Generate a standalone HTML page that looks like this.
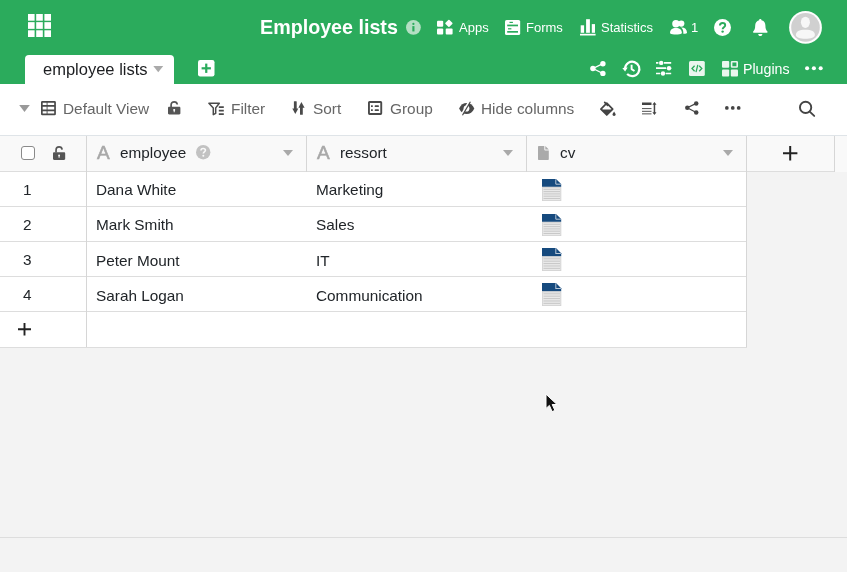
<!DOCTYPE html>
<html><head><meta charset="utf-8"><title>Employee lists</title>
<style>
*{box-sizing:border-box}
html,body{margin:0;padding:0}
body{width:847px;height:572px;overflow:hidden;position:relative;background:#f3f3f3;font-family:"Liberation Sans",sans-serif;color:#212529}
.abs{position:absolute}
.t{position:absolute;white-space:nowrap;line-height:1;will-change:transform}
#hdr{left:0;top:0;width:847px;height:84px;background:#2bab5c}
#hdr .t{color:#fff}
#tb{left:0;top:84px;width:847px;height:51px;background:#fff}
#tb .t{color:#666;font-size:15.4px}
svg{position:absolute;overflow:visible}
#thead{left:0;top:135px;width:847px;height:37px;background:#f9f9f9;border-top:1px solid #dfe4e8}
#thead .bl{position:absolute;left:0;top:35px;width:835px;height:1px;background:#ddd}
.row{left:0;width:747px;height:36px;background:#fff;border-bottom:1px solid #ddd}
.row .t{font-size:15.350px;top:10.200px}
.row.r3 .t,.row.r4 .t{top:11.200px}
.ai{font-size:19px;color:#a8a8a8;-webkit-text-stroke:0.55px #a8a8a8}
.vl{position:absolute;width:1px;background:#d6d6d6}
</style></head><body>
<!-- HEADER -->
<div id="hdr" class="abs">
  <div class="abs" style="left:25px;top:55px;width:149px;height:29px;background:#fff;border-radius:4px 4px 0 0"></div>
  <svg id="grid" style="left:28px;top:14px" width="23" height="23" viewBox="0 0 23 24" preserveAspectRatio="none"><g fill="#fff">
    <rect x="0" y="0" width="6.6" height="7"/><rect x="8.2" y="0" width="6.6" height="7"/><rect x="16.4" y="0" width="6.6" height="7"/>
    <rect x="0" y="8.5" width="6.6" height="7"/><rect x="8.2" y="8.5" width="6.6" height="7"/><rect x="16.4" y="8.5" width="6.6" height="7"/>
    <rect x="0" y="17" width="6.6" height="7"/><rect x="8.2" y="17" width="6.6" height="7"/><rect x="16.4" y="17" width="6.6" height="7"/></g></svg>

  <!-- info -->
  <svg style="left:405.700px;top:20.200px" width="14.800" height="14.800" viewBox="0 0 14.5 14.5"><circle cx="7.25" cy="7.25" r="7.25" fill="#b4dfc4"/><circle cx="7.25" cy="3.9" r="1.1" fill="#2bab5c"/><rect x="6.2" y="6" width="2.1" height="5.2" fill="#2bab5c"/></svg>
  <!-- apps -->
  <svg style="left:437.3px;top:20px" width="16" height="15" viewBox="0 0 16 15"><g fill="#fff"><rect x="0" y="0.7" width="6.2" height="6" rx="1"/><rect x="0" y="8.4" width="6.2" height="6.2" rx="1"/><rect x="8.7" y="8.4" width="6.9" height="6.2" rx="1"/><rect x="9.1" y="0.6" width="5.6" height="5.6" rx="0.8" transform="rotate(45 11.9 3.4)"/></g></svg>
  <!-- forms -->
  <svg style="left:505px;top:20px" width="15.2" height="15" viewBox="0 0 15.2 15"><rect x="0" y="0" width="15.2" height="15" rx="1.6" fill="#fff"/><g fill="#2bab5c"><rect x="4.5" y="1.8" width="3.4" height="1.2"/><rect x="2.2" y="4.6" width="10.8" height="1.7"/><rect x="3" y="8.2" width="3.4" height="1.2"/><rect x="2.2" y="11" width="10.8" height="1.7"/></g></svg>
  <!-- stats -->
  <svg style="left:580px;top:19px" width="15.6" height="16.6" viewBox="0 0 15.6 16.6"><g fill="#fff"><rect x="0.7" y="6.3" width="3.4" height="7.5"/><rect x="6.1" y="0.2" width="3.8" height="13.6"/><rect x="11.8" y="5.1" width="3.2" height="8.7"/><rect x="0" y="14.8" width="15.6" height="1.7"/></g></svg>
  <!-- users -->
  <svg style="left:669.8px;top:20px" width="17" height="14.6" viewBox="0 0 17 14.6"><g fill="#fff"><circle cx="11.3" cy="3.6" r="3.1"/><path d="M11 7.6 C14.5 7.3 16.9 9.2 17 12.6 L17 13 C16 13.6 14.5 13.8 13.3 13.8 L13.3 12 C13.2 10 12.3 8.6 11 7.6Z"/><circle cx="5.9" cy="3.7" r="3.7"/><path d="M0 13.2 C0 9.8 2.2 8 5.9 8 C9.6 8 11.9 9.8 11.9 13.2 C10.5 14.2 8.4 14.6 5.9 14.6 C3.4 14.6 1.4 14.2 0 13.2Z"/></g></svg>
  <!-- help -->
  <svg style="left:714.2px;top:18.9px" width="17" height="17" viewBox="0 0 17 17"><circle cx="8.5" cy="8.5" r="8.5" fill="#fff"/><path d="M5.9 6.6 C5.9 4.9 7.1 4 8.6 4 C10.1 4 11.2 4.9 11.2 6.3 C11.2 8.2 8.7 8.3 8.6 10.2" fill="none" stroke="#2bab5c" stroke-width="1.9"/><circle cx="8.6" cy="12.6" r="1.2" fill="#2bab5c"/></svg>
  <!-- bell -->
  <svg style="left:752.8px;top:18.9px" width="14.6" height="17" viewBox="0 0 14.6 17"><path fill="#fff" d="M7.3 0 C8 0 8.5 0.5 8.5 1.2 C11 1.8 12.4 3.9 12.4 6.5 C12.4 9.8 13.2 11.3 14.4 12.4 C14.9 12.9 14.6 13.8 13.8 13.8 L0.8 13.8 C0 13.8 -0.3 12.9 0.2 12.4 C1.4 11.3 2.2 9.8 2.2 6.5 C2.2 3.9 3.6 1.8 6.1 1.2 C6.1 0.5 6.6 0 7.3 0Z M5.2 14.9 L9.4 14.9 C9.4 16.1 8.5 17 7.3 17 C6.1 17 5.2 16.1 5.2 14.9Z"/></svg>
  <!-- avatar -->
  <svg style="left:789px;top:11px" width="33" height="33" viewBox="0 0 33 33"><circle cx="16.500" cy="16.400" r="16.400" fill="#fdfdfd"/><circle cx="16.500" cy="16.400" r="14.300" fill="#d0d0d0"/><g fill="#f7f7f7"><ellipse cx="16.400" cy="11.300" rx="4.500" ry="5.600"/><path d="M6.900 24 C6.900 20.500 10 18.700 16.400 18.700 C22.800 18.700 25.900 20.500 25.900 24 C25.900 26.400 22 27.700 16.400 27.700 C10.800 27.700 6.900 26.400 6.900 24Z"/></g></svg>
  <!-- tab caret -->
  <svg style="left:153px;top:66px" width="10.5" height="6.5" viewBox="0 0 10.5 6.5"><path d="M0.3 0 L10.2 0 L5.25 6.2Z" fill="#aaa"/></svg>
  <!-- plus square -->
  <svg style="left:198px;top:60px" width="16.500" height="16.500" viewBox="0 0 16.5 16.5"><rect width="16.5" height="16.5" rx="2.2" fill="#fff"/><rect x="3.6" y="7.2" width="9.300" height="2.2" fill="#2bab5c"/><rect x="7.15" y="3.6" width="2.2" height="9.300" fill="#2bab5c"/></svg>
  <!-- share -->
  <svg style="left:589.900px;top:61px" width="15.800" height="15" viewBox="0 0 15.800 15"><g fill="#fff"><path d="M12.900 2.600 L3 7.500 L12.900 12.500" fill="none" stroke="#fff" stroke-width="1.300"/><circle cx="2.900" cy="7.500" r="2.700"/><circle cx="12.900" cy="2.700" r="2.700"/><circle cx="12.900" cy="12.400" r="2.700"/></g></svg>
  <!-- history -->
  <svg style="left:621.500px;top:59.500px" width="18.500" height="17.800" viewBox="0 0 18.500 17.800"><path d="M3.050 8.300 A7.200 7.200 0 1 1 5.100 14" fill="none" stroke="#fff" stroke-width="2.200"/><path d="M0.300 7.900 L5.700 7.400 L3.100 11.600Z" fill="#fff"/><path d="M9.600 4.800 V9.100 L12.500 11" fill="none" stroke="#fff" stroke-width="1.900" stroke-linejoin="round"/></svg>
  <!-- sliders -->
  <svg style="left:656.300px;top:61px" width="15.200" height="15" viewBox="0 0 15.200 15"><g stroke="#fff" stroke-width="1.700" fill="none"><path d="M0 1.900 H2.400 M7.900 1.900 H15.200 M0 7.200 H10.200 M14.900 7.200 H15.200 M0 12.500 H4.200 M9.700 12.500 H15.200"/></g><g fill="#fff"><circle cx="5.200" cy="1.900" r="2.200"/><circle cx="13" cy="7.200" r="2.200"/><circle cx="7" cy="12.500" r="2.200"/></g></svg>
  <!-- code -->
  <svg style="left:689px;top:61px" width="15.800" height="15" viewBox="0 0 15.800 15"><rect width="15.800" height="15" rx="1.500" fill="#eaf6ee"/><g stroke="#2bab5c" stroke-width="1.300" fill="none"><path d="M5.600 4.800 L3 7.500 L5.600 10.200"/><path d="M10.200 4.800 L12.800 7.500 L10.200 10.200"/><path d="M8.800 3.900 L7 11.100"/></g></svg>
  <!-- plugins -->
  <svg style="left:722px;top:60.800px" width="16" height="15.400" viewBox="0 0 16 15.400"><g fill="#eaf6ee"><rect x="0" y="0" width="7.200" height="6.800" rx="1"/><rect x="0" y="8.400" width="7.200" height="7" rx="1"/><rect x="8.800" y="8.400" width="7.200" height="7" rx="1"/></g><rect x="9.600" y="0.800" width="5.600" height="5.200" rx="0.500" fill="none" stroke="#eaf6ee" stroke-width="1.600"/></svg>
  <!-- ellipsis -->
  <svg style="left:805px;top:66px" width="18" height="4.400" viewBox="0 0 18 4.400"><g fill="#fff"><circle cx="2.100" cy="2.200" r="2.050"/><circle cx="8.900" cy="2.200" r="2.050"/><circle cx="15.700" cy="2.200" r="2.050"/></g></svg>
  <div class="t" style="left:259.600px;top:18.400px;font-size:19.700px;font-weight:bold">Employee lists</div>
  <div class="t" style="left:459px;top:21px;font-size:13px">Apps</div>
  <div class="t" style="left:526px;top:21px;font-size:13px">Forms</div>
  <div class="t" style="left:601px;top:21px;font-size:13px">Statistics</div>
  <div class="t" style="left:691px;top:21px;font-size:13px">1</div>
  <div class="t" style="left:43.300px;top:60.600px;font-size:16.500px;color:#1c1e21">employee lists</div>
  <div class="t" style="left:743px;top:61.6px;font-size:14.2px">Plugins</div>
</div>
<!-- TOOLBAR -->
<div id="tb" class="abs">

  <!-- caret -->
  <svg style="left:19.400px;top:20.800px" width="11" height="7.200" viewBox="0 0 11 7.200"><path d="M0.200 0 L10.800 0 L5.500 7Z" fill="#999"/></svg>
  <!-- table icon -->
  <svg style="left:41px;top:17px" width="15" height="14.300" viewBox="0 0 15 14.300"><g fill="none" stroke="#4a4a4a" stroke-width="1.700"><rect x="0.850" y="0.850" width="13.200" height="12.600" rx="0.500"/><path d="M0.850 4.900 H14 M0.850 9.400 H14"/><path d="M6.100 0.850 V13.400" stroke-width="1.100" opacity="0.800"/></g></svg>
  <!-- unlock -->
  <svg style="left:168.200px;top:17.200px" width="12.400" height="13.400" viewBox="0 0 12.400 13.400"><path d="M3.100 6 V3.900 C3.100 2 4.400 0.900 6.200 0.900 C7.900 0.900 9.100 1.900 9.300 3.500" fill="none" stroke="#555" stroke-width="1.700"/><path fill="#555" fill-rule="evenodd" d="M1.200 5.800 H11.200 C11.900 5.800 12.400 6.300 12.400 7 V12.200 C12.400 12.900 11.900 13.400 11.200 13.400 H1.200 C0.500 13.400 0 12.900 0 12.200 V7 C0 6.300 0.500 5.800 1.200 5.800Z M6.200 8 C5.600 8 5.200 8.400 5.200 9 C5.200 9.400 5.400 9.700 5.700 9.900 V11.200 H6.700 V9.900 C7 9.700 7.200 9.400 7.200 9 C7.200 8.400 6.800 8 6.200 8Z"/></svg>
  <!-- filter -->
  <svg style="left:208px;top:17.500px" width="16" height="13.500" viewBox="0 0 16 13.500"><path d="M0.900 1.200 H11.300 L7.700 5.900 V11.300 L5.300 12.700 V5.900Z" fill="none" stroke="#4a4a4a" stroke-width="1.500" stroke-linejoin="round"/><path d="M10.800 5.100 H15.800 M10.800 8.600 H15.800 M10.800 12.200 H15.800" stroke="#4a4a4a" stroke-width="1.800"/></svg>
  <!-- sort -->
  <svg style="left:292px;top:17px" width="13" height="14" viewBox="0 0 13 14"><g fill="#4a4a4a"><rect x="1.900" y="0.200" width="2.800" height="8.600" rx="0.500"/><path d="M0.300 7.600 H6.300 L3.300 13Z"/><rect x="8" y="6" width="2.800" height="7.700" rx="0.500"/><path d="M6.400 6.800 H12.600 L9.400 1Z"/></g></svg>
  <!-- group -->
  <svg style="left:368px;top:17px" width="14.200" height="13.900" viewBox="0 0 14.200 13.900"><rect x="0.950" y="0.950" width="12.300" height="12" rx="0.600" fill="none" stroke="#4a4a4a" stroke-width="1.900"/><g fill="#4a4a4a"><rect x="3" y="4.300" width="1.800" height="1.700"/><rect x="6.700" y="4.300" width="4.200" height="1.700" rx="0.600"/><rect x="3" y="8.300" width="1.800" height="1.700"/><rect x="6.700" y="8.300" width="4.200" height="1.700" rx="0.600"/></g></svg>
  <!-- eye slash -->
  <svg style="left:458.600px;top:18px" width="15.400" height="13" viewBox="0 0 15.400 13"><path d="M0.100 6.500 C1.800 2.800 4.500 1 7.700 1 C10.900 1 13.600 2.800 15.300 6.500 C13.600 10.200 10.900 12 7.700 12 C4.500 12 1.800 10.200 0.100 6.500Z" fill="#4a4a4a"/><ellipse cx="7.500" cy="6.500" rx="2.900" ry="3.100" fill="#fff"/><path d="M10.100 -0.300 L2.700 12.700" stroke="#fff" stroke-width="2.200"/><path d="M11.200 0.100 L3.700 12.900" stroke="#4a4a4a" stroke-width="1.100" stroke-linecap="round"/></svg>
  <!-- paint bucket -->
  <svg style="left:599.800px;top:17.700px" width="16.200" height="14.800" viewBox="0 0 16.200 14.800"><path d="M6.800 1.200 L12.700 7.100 L6.800 13 L0.900 7.100Z" fill="none" stroke="#444" stroke-width="1.700" stroke-linejoin="round"/><path d="M1.200 7.500 H12.400 L6.800 13.200Z" fill="#444"/><path d="M4.700 0.400 L7.600 3.300" stroke="#444" stroke-width="1.700" stroke-linecap="round"/><path d="M14.100 9.500 C14.900 10.800 15.700 11.700 15.700 12.600 C15.700 13.400 15 14.100 14.100 14.100 C13.200 14.100 12.500 13.400 12.500 12.600 C12.500 11.700 13.300 10.800 14.100 9.500Z" fill="#444"/></svg>
  <!-- row height -->
  <svg style="left:642.300px;top:17.600px" width="14.800" height="13" viewBox="0 0 14.800 13"><g fill="#444"><rect x="0" y="0.500" width="9.500" height="2.500"/><rect x="0" y="6" width="9.500" height="1.100" opacity="0.850"/><rect x="0" y="8.800" width="9.500" height="1.100" opacity="0.850"/><rect x="0" y="11.300" width="9.500" height="1.100" opacity="0.850"/><rect x="11.700" y="1.500" width="1.500" height="10"/><path d="M10.400 2.800 L12.450 0 L14.500 2.800Z M10.400 10.200 L12.450 13 L14.500 10.200Z"/></g></svg>
  <!-- share -->
  <svg style="left:684.600px;top:17.300px" width="14" height="14" viewBox="0 0 14 14"><g fill="#444"><path d="M11.200 2.400 L2.300 6.800 L11.200 11.500" fill="none" stroke="#444" stroke-width="1.200"/><circle cx="2.300" cy="6.800" r="2.250"/><circle cx="11.200" cy="2.400" r="2.250"/><circle cx="11.200" cy="11.500" r="2.250"/></g></svg>
  <!-- ellipsis -->
  <svg style="left:725.300px;top:22.300px" width="15.600" height="3.800" viewBox="0 0 15.600 3.800"><g fill="#444"><circle cx="1.850" cy="1.900" r="1.850"/><circle cx="7.750" cy="1.900" r="1.850"/><circle cx="13.700" cy="1.900" r="1.850"/></g></svg>
  <!-- search -->
  <svg style="left:798px;top:16px" width="18" height="18" viewBox="0 0 18 18"><circle cx="7.600" cy="7.400" r="5.650" fill="none" stroke="#444" stroke-width="1.900"/><path d="M11.700 11.600 L16.200 15.900" stroke="#444" stroke-width="1.900" stroke-linecap="round"/></svg>
  <div class="t" style="left:63px;top:17px">Default View</div>
  <div class="t" style="left:230.600px;top:17px">Filter</div>
  <div class="t" style="left:313px;top:17px">Sort</div>
  <div class="t" style="left:389.500px;top:17px">Group</div>
  <div class="t" style="left:480.500px;top:17px">Hide columns</div>
</div>
<!-- TABLE HEADER -->
<div id="thead" class="abs">
  <div class="bl"></div>

  <!-- checkbox -->
  <div class="abs" style="left:21px;top:10px;width:14px;height:14px;border:1px solid #8a8a8a;border-radius:3px;background:#fff"></div>
  <!-- unlock -->
  <svg style="left:53px;top:10px" width="12.200" height="14" viewBox="0 0 12.400 14.200"><path d="M3.100 6.600 V4.200 C3.100 2.100 4.400 0.900 6.200 0.900 C7.900 0.900 9.100 1.900 9.300 3.600" fill="none" stroke="#555" stroke-width="1.700"/><path fill="#555" fill-rule="evenodd" d="M1.200 6.400 H11.200 C11.900 6.400 12.400 6.900 12.400 7.600 V13 C12.400 13.700 11.900 14.200 11.200 14.200 H1.200 C0.500 14.200 0 13.700 0 13 V7.600 C0 6.900 0.500 6.400 1.200 6.400Z M6.200 8.700 C5.600 8.700 5.200 9.100 5.200 9.700 C5.200 10.100 5.400 10.400 5.700 10.600 V12 H6.700 V10.600 C7 10.400 7.200 10.100 7.200 9.700 C7.200 9.100 6.800 8.700 6.200 8.700Z"/></svg>
  <div class="t ai" style="left:97px;top:6.700px">A</div>
  <div class="t ai" style="left:317px;top:6.700px">A</div>
  <!-- help -->
  <svg style="left:196.400px;top:9px" width="14.400" height="14.400" viewBox="0 0 14.200 14.200"><circle cx="7.100" cy="7.100" r="7.100" fill="#c2c2c2"/><path d="M4.900 5.500 C4.900 4.100 5.900 3.400 7.100 3.400 C8.300 3.400 9.300 4.100 9.300 5.300 C9.300 6.800 7.200 6.900 7.200 8.500" fill="none" stroke="#f9f9f9" stroke-width="1.600"/><circle cx="7.200" cy="10.600" r="1" fill="#f9f9f9"/></svg>
  <!-- carets -->
  <svg style="left:282.600px;top:14.300px" width="10" height="6" viewBox="0 0 10 6"><path d="M0 0 H10 L5 6Z" fill="#aaa"/></svg>
  <svg style="left:502.600px;top:14.300px" width="10" height="6" viewBox="0 0 10 6"><path d="M0 0 H10 L5 6Z" fill="#aaa"/></svg>
  <svg style="left:722.800px;top:14.300px" width="10" height="6" viewBox="0 0 10 6"><path d="M0 0 H10 L5 6Z" fill="#aaa"/></svg>
  <!-- file icon -->
  <svg style="left:538px;top:9.500px" width="10.800" height="14" viewBox="0 0 10.800 14"><path d="M1 0 H6.300 V3.600 C6.300 4.200 6.700 4.500 7.200 4.500 H10.800 V13 C10.800 13.600 10.400 14 9.800 14 H1 C0.400 14 0 13.600 0 13 V1 C0 0.400 0.400 0 1 0Z M7.300 0 L10.800 3.500 H7.300Z" fill="#aaa"/></svg>
  <!-- plus -->
  <svg style="left:783.400px;top:9.600px" width="14.400" height="14.400" viewBox="0 0 14.400 14.400"><path d="M7.200 0 V14.400 M0 7.200 H14.400" stroke="#222" stroke-width="2"/></svg>
  <div class="t" style="left:119.800px;top:9.200px;font-size:15.300px">employee</div>
  <div class="t" style="left:339.800px;top:9.200px;font-size:15.300px">ressort</div>
  <div class="t" style="left:560px;top:9.200px;font-size:15.300px">cv</div>
</div>
<!-- ROWS -->
<div class="row abs" style="top:172px;height:35px"><svg style="left:541.500px;top:7px" width="20" height="22" viewBox="0 0 20 22"><rect x="0" y="7" width="19.200" height="15" fill="#e9e9e9"/><path d="M0 0 H14 L19.200 5 V7.800 H0Z" fill="#164a7e"/><path d="M13.800 0.300 V5.200 H18.900" fill="none" stroke="#b9c7d6" stroke-width="1"/><g stroke="#c4c4c4" stroke-width="0.900"><path d="M1.500 10.300 H18 M1.500 12.600 H18 M1.500 14.900 H18 M1.500 17.200 H18 M1.500 19.500 H18"/></g><rect x="0.400" y="8.600" width="18.400" height="13" fill="none" stroke="#d2d2d2" stroke-width="0.800"/></svg><div class="t" style="left:23.200px">1</div><div class="t" style="left:95.600px">Dana White</div><div class="t" style="left:316px">Marketing</div></div>
<div class="row abs" style="top:207px;height:35px"><svg style="left:541.500px;top:7px" width="20" height="22" viewBox="0 0 20 22"><rect x="0" y="7" width="19.200" height="15" fill="#e9e9e9"/><path d="M0 0 H14 L19.200 5 V7.800 H0Z" fill="#164a7e"/><path d="M13.800 0.300 V5.200 H18.900" fill="none" stroke="#b9c7d6" stroke-width="1"/><g stroke="#c4c4c4" stroke-width="0.900"><path d="M1.500 10.300 H18 M1.500 12.600 H18 M1.500 14.900 H18 M1.500 17.200 H18 M1.500 19.500 H18"/></g><rect x="0.400" y="8.600" width="18.400" height="13" fill="none" stroke="#d2d2d2" stroke-width="0.800"/></svg><div class="t" style="left:23.200px">2</div><div class="t" style="left:95.600px">Mark Smith</div><div class="t" style="left:316px">Sales</div></div>
<div class="row r3 abs" style="top:242px;height:35px"><svg style="left:541.500px;top:6px" width="20" height="23" viewBox="0 0 20 22" preserveAspectRatio="none"><rect x="0" y="7" width="19.200" height="15" fill="#e9e9e9"/><path d="M0 0 H14 L19.200 5 V7.800 H0Z" fill="#164a7e"/><path d="M13.800 0.300 V5.200 H18.900" fill="none" stroke="#b9c7d6" stroke-width="1"/><g stroke="#c4c4c4" stroke-width="0.900"><path d="M1.500 10.300 H18 M1.500 12.600 H18 M1.500 14.900 H18 M1.500 17.200 H18 M1.500 19.500 H18"/></g><rect x="0.400" y="8.600" width="18.400" height="13" fill="none" stroke="#d2d2d2" stroke-width="0.800"/></svg><div class="t" style="left:23.200px;top:10.200px">3</div><div class="t" style="left:95.600px">Peter Mount</div><div class="t" style="left:316px">IT</div></div>
<div class="row r4 abs" style="top:277px;height:35px"><svg style="left:541.500px;top:6px" width="20" height="23" viewBox="0 0 20 22" preserveAspectRatio="none"><rect x="0" y="7" width="19.200" height="15" fill="#e9e9e9"/><path d="M0 0 H14 L19.200 5 V7.800 H0Z" fill="#164a7e"/><path d="M13.800 0.300 V5.200 H18.900" fill="none" stroke="#b9c7d6" stroke-width="1"/><g stroke="#c4c4c4" stroke-width="0.900"><path d="M1.500 10.300 H18 M1.500 12.600 H18 M1.500 14.900 H18 M1.500 17.200 H18 M1.500 19.500 H18"/></g><rect x="0.400" y="8.600" width="18.400" height="13" fill="none" stroke="#d2d2d2" stroke-width="0.800"/></svg><div class="t" style="left:23.200px;top:10.200px">4</div><div class="t" style="left:95.600px">Sarah Logan</div><div class="t" style="left:316px">Communication</div></div>
<div class="row abs" style="top:312px;height:36px"><svg style="left:17.800px;top:11.400px" width="13" height="12.600" viewBox="0 0 13 12.600"><path d="M6.500 0 V12.600 M0 6.300 H13" stroke="#222" stroke-width="1.900"/></svg></div>
<div class="vl" style="left:86px;top:136px;height:211px"></div>
<div class="vl" style="left:306px;top:136px;height:36px"></div>
<div class="vl" style="left:526px;top:136px;height:36px"></div>
<div class="vl" style="left:746px;top:136px;height:211px"></div>
<div class="vl" style="left:834px;top:136px;height:36px"></div>
<div class="abs" style="left:0;top:537px;width:847px;height:1px;background:#ddd"></div>
<svg style="left:545px;top:393px" width="14" height="21" viewBox="0 0 14 21"><path d="M1 1.200 V15.400 L4.400 12.400 L7.100 18.600 L9.900 17.400 L7.200 11.500 H12Z" fill="#111" stroke="#fff" stroke-width="1" stroke-linejoin="round"/></svg>
</body></html>
